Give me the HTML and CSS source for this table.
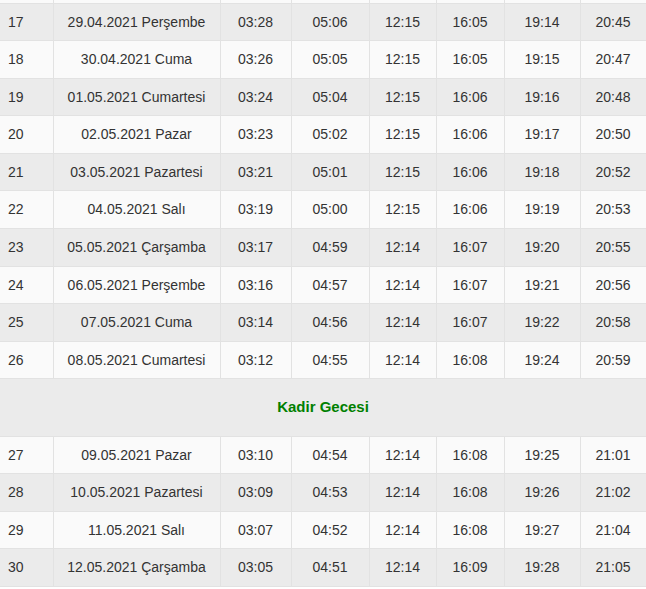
FILE: index.html
```html
<!DOCTYPE html>
<html lang="tr">
<head>
<meta charset="utf-8">
<title>İmsakiye</title>
<link rel="stylesheet" href="styles.css">
</head>
<body>
<div class="wrap">
<table class="times">
<colgroup>
<col class="c-no"><col class="c-date"><col class="c-t1"><col class="c-t2"><col class="c-t3"><col class="c-t4"><col class="c-t5"><col class="c-t6">
</colgroup>
<tbody>
<tr class="cut"><td>&nbsp;</td><td>&nbsp;</td><td>&nbsp;</td><td>&nbsp;</td><td>&nbsp;</td><td>&nbsp;</td><td>&nbsp;</td><td>&nbsp;</td></tr>
<tr><td>17</td><td>29.04.2021 Perşembe</td><td>03:28</td><td>05:06</td><td>12:15</td><td>16:05</td><td>19:14</td><td>20:45</td></tr>
<tr><td>18</td><td>30.04.2021 Cuma</td><td>03:26</td><td>05:05</td><td>12:15</td><td>16:05</td><td>19:15</td><td>20:47</td></tr>
<tr><td>19</td><td>01.05.2021 Cumartesi</td><td>03:24</td><td>05:04</td><td>12:15</td><td>16:06</td><td>19:16</td><td>20:48</td></tr>
<tr><td>20</td><td>02.05.2021 Pazar</td><td>03:23</td><td>05:02</td><td>12:15</td><td>16:06</td><td>19:17</td><td>20:50</td></tr>
<tr><td>21</td><td>03.05.2021 Pazartesi</td><td>03:21</td><td>05:01</td><td>12:15</td><td>16:06</td><td>19:18</td><td>20:52</td></tr>
<tr><td>22</td><td>04.05.2021 Salı</td><td>03:19</td><td>05:00</td><td>12:15</td><td>16:06</td><td>19:19</td><td>20:53</td></tr>
<tr><td>23</td><td>05.05.2021 Çarşamba</td><td>03:17</td><td>04:59</td><td>12:14</td><td>16:07</td><td>19:20</td><td>20:55</td></tr>
<tr><td>24</td><td>06.05.2021 Perşembe</td><td>03:16</td><td>04:57</td><td>12:14</td><td>16:07</td><td>19:21</td><td>20:56</td></tr>
<tr><td>25</td><td>07.05.2021 Cuma</td><td>03:14</td><td>04:56</td><td>12:14</td><td>16:07</td><td>19:22</td><td>20:58</td></tr>
<tr><td>26</td><td>08.05.2021 Cumartesi</td><td>03:12</td><td>04:55</td><td>12:14</td><td>16:08</td><td>19:24</td><td>20:59</td></tr>
<tr class="special"><td colspan="8">Kadir Gecesi</td></tr>
<tr><td>27</td><td>09.05.2021 Pazar</td><td>03:10</td><td>04:54</td><td>12:14</td><td>16:08</td><td>19:25</td><td>21:01</td></tr>
<tr><td>28</td><td>10.05.2021 Pazartesi</td><td>03:09</td><td>04:53</td><td>12:14</td><td>16:08</td><td>19:26</td><td>21:02</td></tr>
<tr><td>29</td><td>11.05.2021 Salı</td><td>03:07</td><td>04:52</td><td>12:14</td><td>16:08</td><td>19:27</td><td>21:04</td></tr>
<tr><td>30</td><td>12.05.2021 Çarşamba</td><td>03:05</td><td>04:51</td><td>12:14</td><td>16:09</td><td>19:28</td><td>21:05</td></tr>
</tbody>
</table>
</div>
</body>
</html>
```
FILE: styles.css
```css
html, body {
  margin: 0;
  padding: 0;
  background: #ffffff;
}
body {
  font-family: "Liberation Sans", Arial, sans-serif;
  font-size: 14px;
  color: #333333;
}
.wrap {
  width: 646px;
  overflow: hidden;
  height: 589px;
}
.times {
  width: 646px;
  table-layout: fixed;
  border-collapse: collapse;
  margin-top: -34.85px;
}
.c-no { width: 53px; }
.c-date { width: 167px; }
.c-t1 { width: 71px; }
.c-t2 { width: 78px; }
.c-t3 { width: 67px; }
.c-t4 { width: 68px; }
.c-t5 { width: 76px; }
.c-t6 { width: 66px; }
.times td {
  padding: 8px;
  line-height: 20.55px;
  border: 1px solid #e2e2e2;
  text-align: center;
  white-space: nowrap;
  background: #fafafa;
}
.times td:first-child {
  text-align: left;
  border-left: 0;
}
.times tr:nth-child(even) td {
  background: #ebebeb;
}
.times tr.special td {
  text-align: center;
  padding: 18px 8px;
  font-size: 15px;
  font-weight: bold;
  color: #008000;
  border-left: 0;
  border-right: 0;
}
```
